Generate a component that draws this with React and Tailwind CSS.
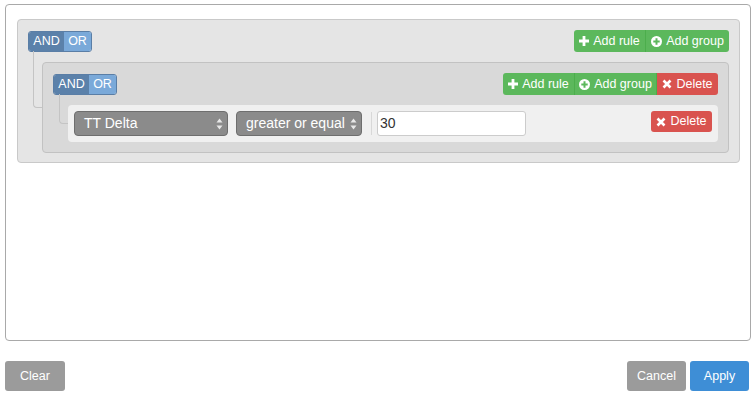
import React from 'react'

const font = { fontFamily: '"Liberation Sans", Arial, sans-serif' }

function PlusIcon() {
  return (
    <svg width="10" height="10" viewBox="0 0 10 10" className="shrink-0">
      <path d="M3.6 0h2.8v3.6H10v2.8H6.4V10H3.6V6.4H0V3.6h3.6z" fill="currentColor" />
    </svg>
  )
}

function PlusCircleIcon() {
  return (
    <svg width="11" height="11" viewBox="0 0 11 11" className="shrink-0">
      <circle cx="5.5" cy="5.5" r="5.5" fill="currentColor" />
      <path d="M4.5 2.3h2v2.2h2.2v2H6.5v2.2h-2V6.5H2.3v-2h2.2z" fill="#5cb85c" />
    </svg>
  )
}

function XIcon() {
  return (
    <svg width="10" height="10" viewBox="0 0 10 10" className="shrink-0">
      <path d="M1.5 1.5l7 7M8.5 1.5l-7 7" stroke="currentColor" strokeWidth="2.6" strokeLinecap="butt" />
    </svg>
  )
}

function Arrows() {
  return (
    <svg width="7" height="12" viewBox="0 0 7 12" className="shrink-0">
      <path d="M3.5 0.5L6.5 4.5H0.5z" fill="#e8e8e8" />
      <path d="M3.5 11.5L6.5 7.5H0.5z" fill="#e8e8e8" />
    </svg>
  )
}

const green = 'flex h-[22px] items-center justify-center gap-[4px] whitespace-nowrap bg-[#5cb85c] text-[12.5px] text-white'
const red = 'flex h-[22px] items-center justify-center gap-[4px] whitespace-nowrap bg-[#d9534f] text-[12.5px] text-white'

function Conditions() {
  return (
    <div className="flex h-[21px] overflow-hidden rounded-[3px] border border-[#5a7ea6] text-[12.5px] text-white">
      <span className="flex w-[35px] items-center justify-center bg-[#5b81aa]">AND</span>
      <span className="flex w-[27px] items-center justify-center bg-[#7aa9d9]">OR</span>
    </div>
  )
}

function AddButtons({ withDelete }) {
  return (
    <div className="flex overflow-hidden rounded-[3px]">
      <button className={`${green} w-[72px] border-r border-[#4cae4c]`}><PlusIcon />Add rule</button>
      <button className={`${green} ${withDelete ? 'w-[82px] border-r border-[#4cae4c]' : 'w-[83px]'}`}><PlusCircleIcon />Add group</button>
      {withDelete && <button className={`${red} w-[61px]`}><XIcon />Delete</button>}
    </div>
  )
}

function Select({ label, width }) {
  return (
    <div className={`flex h-[25px] items-center justify-between whitespace-nowrap rounded-[4px] border border-[#6e6e6e] bg-[#8b8b8b] pl-[9px] pr-[4px] text-[14px] text-white ${width}`}>
      <span>{label}</span>
      <Arrows />
    </div>
  )
}

export default function App() {
  return (
    <div className="bg-white px-[5px] pt-[4px]" style={font}>
      <div className="h-[337px] w-[746px] rounded-[4px] border border-[#a9a9a9] pl-[11px] pr-[10px] pt-[14px]">
        {/* outer group */}
        <div className="relative rounded-[4px] border border-[#c9c9c9] bg-[#e5e5e5] px-[10px] pb-[9px] pt-[10px]">
          <div className="flex h-[22px] items-center justify-between">
            <Conditions />
            <AddButtons />
          </div>
          <div className="relative ml-[14px] mt-[10px]">
            <div className="absolute left-[-9px] top-[-11px] h-[57px] w-[9px] rounded-bl-[4px] border-b border-l border-[#c4c4c4]" />
            {/* inner group */}
            <div className="rounded-[4px] border border-[#c2c2c2] bg-[#d9d9d9] px-[10px] pb-[10px] pt-[10px]">
              <div className="flex h-[22px] items-center justify-between">
                <Conditions />
                <AddButtons withDelete />
              </div>
              <div className="relative ml-[15px] mt-[10px]">
                <div className="absolute left-[-9px] top-[-11px] h-[30px] w-[9px] rounded-bl-[4px] border-b border-l border-[#c4c4c4]" />
                {/* rule */}
                <div className="flex h-[37px] items-start justify-between rounded-[4px] bg-[#f0f0f0] p-[6px]">
                  <div className="flex items-center">
                    <Select label="TT Delta" width="w-[154px]" />
                    <div className="ml-[8px]"><Select label="greater or equal" width="w-[126px]" /></div>
                    <div className="ml-[9px] h-[23px] w-px bg-[#d8d8d8]" />
                    <div className="ml-[5px] flex h-[25px] w-[149px] items-center rounded-[3px] border border-[#cccccc] bg-white pl-[2px] text-[14px] text-[#333]">30</div>
                  </div>
                  <button className="flex h-[21px] w-[61px] items-center justify-center gap-[4px] whitespace-nowrap rounded-[3px] bg-[#d9534f] text-[12.5px] text-white"><XIcon />Delete</button>
                </div>
              </div>
            </div>
          </div>
        </div>
      </div>
      <div className="mt-[20px] flex w-[744px] items-center justify-between">
        <button className="h-[30px] w-[60px] rounded-[3px] bg-[#9b9b9b] text-[12.5px] text-white">Clear</button>
        <div className="flex gap-[4px]">
          <button className="h-[30px] w-[59px] rounded-[3px] bg-[#9b9b9b] text-[12.5px] text-white">Cancel</button>
          <button className="h-[30px] w-[59px] rounded-[3px] bg-[#3e8ed6] text-[12.5px] text-white">Apply</button>
        </div>
      </div>
    </div>
  )
}
